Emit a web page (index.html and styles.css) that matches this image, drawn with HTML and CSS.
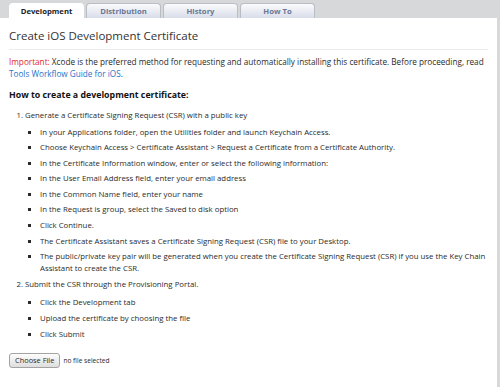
FILE: index.html
```html
<!DOCTYPE html>
<html>
<head>
<meta charset="utf-8">
<link rel="stylesheet" href="styles.css">
</head>
<body>
<div class="page">
  <div class="tabbar">
    <div class="tab active">Development</div>
    <div class="tab">Distribution</div>
    <div class="tab">History</div>
    <div class="tab">How To</div>
  </div>
  <div class="panel">
    <h1 class="title">Create iOS Development Certificate</h1>
    <p class="note"><span class="important">Important:</span> Xcode is the preferred method for requesting and automatically installing this certificate. Before proceeding, read <a class="link">Tools Workflow Guide for iOS</a>.</p>
    <h2 class="heading">How to create a development certificate:</h2>
    <ol class="steps">
      <li class="step">Generate a Certificate Signing Request (CSR) with a public key
        <ul class="subs">
          <li>In your Applications folder, open the Utilities folder and launch Keychain Access.</li>
          <li>Choose Keychain Access &gt; Certificate Assistant &gt; Request a Certificate from a Certificate Authority.</li>
          <li>In the Certificate Information window, enter or select the following information:</li>
          <li>In the User Email Address field, enter your email address</li>
          <li>In the Common Name field, enter your name</li>
          <li>In the Request is group, select the Saved to disk option</li>
          <li>Click Continue.</li>
          <li>The Certificate Assistant saves a Certificate Signing Request (CSR) file to your Desktop.</li>
          <li>The public/private key pair will be generated when you create the Certificate Signing Request (CSR) if you use the Key Chain Assistant to create the CSR.</li>
        </ul>
      </li>
      <li class="step">Submit the CSR through the Provisioning Portal.
        <ul class="subs">
          <li>Click the Development tab</li>
          <li>Upload the certificate by choosing the file</li>
          <li>Click Submit</li>
        </ul>
      </li>
    </ol>
    <div class="upload">
      <span class="choose">Choose File</span>
      <span class="nofile">no file selected</span>
    </div>
  </div>
</div>
</body>
</html>
```
FILE: styles.css
```css
html, body {
  margin: 0;
  padding: 0;
  background: #d6d8da;
}
body {
  font-family: "Open Sans", "DejaVu Sans", sans-serif;
  color: #2a2a2a;
  width: 500px;
  height: 387px;
  overflow: hidden;
}
.page {
  display: flex;
  flex-direction: column;
  height: 387px;
}
.tabbar {
  display: flex;
  align-items: flex-end;
  height: 18px;
  padding-left: 9px;
  gap: 2px;
  box-sizing: border-box;
}
.tab {
  width: 75px;
  height: 15px;
  box-sizing: border-box;
  border: 1px solid #b9bdc6;
  border-bottom: none;
  border-radius: 4px 4px 0 0;
  background: linear-gradient(#fbfbfd, #d9dde9);
  color: #6a7896;
  font-weight: bold;
  font-size: 7.7px;
  line-height: 14px;
  text-align: center;
}
.tab.active {
  background: #ffffff;
  border-color: #ffffff;
  color: #1e1e1e;
}
.panel {
  flex: 1;
  background: #ffffff;
  margin-right: 3px;
  padding: 0 9px;
  display: flex;
  flex-direction: column;
}
.title {
  margin: 10px 0 0;
  font-size: 11.5px;
  font-weight: normal;
  line-height: 16px;
  color: #333;
  padding-bottom: 5px;
  border-bottom: 1px solid #ececec;
}
.note {
  margin: 6px 0 0;
  font-size: 8.2px;
  line-height: 12px;
}
.important { color: #e0262a; }
.link { color: #2673c9; }
.heading {
  margin: 9px 0 0;
  font-size: 8.8px;
  font-weight: bold;
  line-height: 12px;
  color: #111;
}
.steps {
  margin: 7.5px 0 0;
  padding-left: 16px;
  font-size: 7.8px;
  line-height: 12px;
}
.step { margin-bottom: 0.4px; }
.subs {
  margin: 5px 0 0;
  padding-left: 15px;
  list-style: square;
}
.subs li { margin-bottom: 3.6px; }
.step:last-child .subs { margin-top: 6.5px; }
.step:last-child .subs li { margin-bottom: 4px; }
.upload {
  display: flex;
  align-items: center;
  gap: 3px;
  margin-top: 9px;
  font-size: 7.4px;
}
.nofile { font-size: 6.6px; }
.choose {
  border: 1px solid #a3a3a3;
  border-radius: 3px;
  background: linear-gradient(#fdfdfd, #dedede);
  padding: 0 5px;
  height: 13px;
  line-height: 13px;
}
```
